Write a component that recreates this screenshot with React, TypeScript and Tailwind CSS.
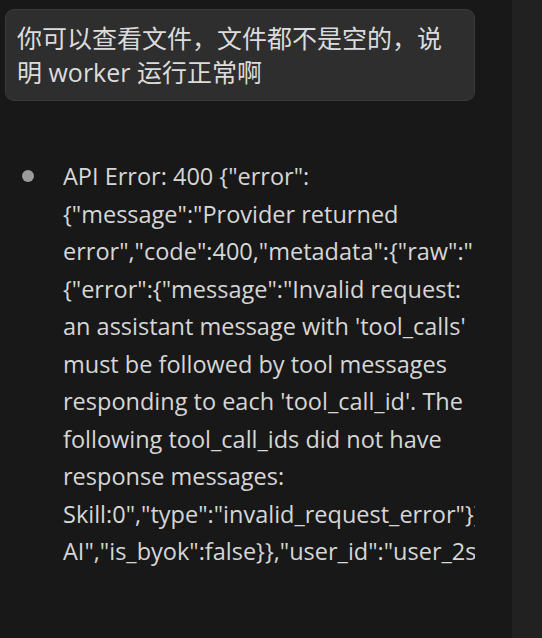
const errorLines = [
  'API Error: 400 {"error":',
  '{"message":"Provider returned',
  'error","code":400,"metadata":{"raw":"',
  '{"error":{"message":"Invalid request:',
  "an assistant message with 'tool_calls'",
  "must be followed by tool messages",
  "responding to each 'tool_call_id'. The",
  "following tool_call_ids did not have",
  "response messages:",
  'Skill:0","type":"invalid_request_error"}}',
  'AI","is_byok":false}},"user_id":"user_2sd9k"}',
];

export default function App() {
  return (
    <div className="flex h-[638px] w-[542px] overflow-hidden bg-[#181818] font-['Open_Sans','Noto_Sans_CJK_SC',sans-serif]">
      <div className="flex-1 pl-[5px] pt-[9px]">
        <div className="w-[470px] rounded-[9px] border border-[#3a3a3a] bg-[#2e2e2e] px-[11px] py-[11px] text-[25px] leading-[34px] text-[#dcdcdc]">
          <p>你可以查看文件，文件都不是空的，说</p>
          <p>明 worker 运行正常啊</p>
        </div>

        <div className="mt-[57px] flex">
          <div className="flex w-[58px] shrink-0 pt-[12px] pl-[17px]">
            <span className="h-[12px] w-[12px] rounded-full bg-[#9b9b9b]" />
          </div>
          <div className="w-[412px] overflow-hidden text-[23.5px] leading-[37.5px] text-[#d6d6d6]">
            {errorLines.map((line, i) => (
              <div key={i} className="whitespace-nowrap">
                {line}
              </div>
            ))}
          </div>
        </div>
      </div>
      <div className="w-[30px] shrink-0 bg-[#212121]" />
    </div>
  );
}
